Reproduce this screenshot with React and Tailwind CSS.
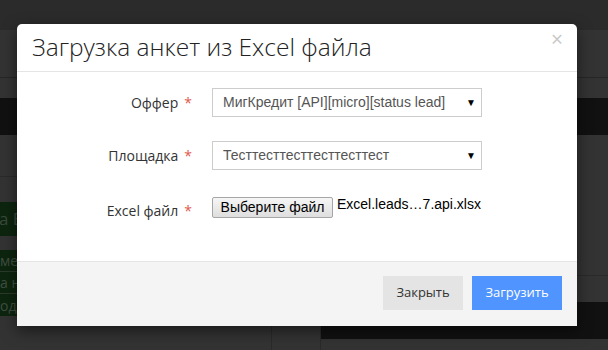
import React from 'react';

const Field = ({ label, children, className = '' }) => (
  <div className={`flex items-center ${className}`}>
    <div className="w-[175px] shrink-0 text-right font-['Open_Sans',sans-serif] text-[14px] text-[#333]">
      {label}
      <span className="ml-[6px] text-[#e05a4e]">*</span>
    </div>
    <div className="ml-[20px] flex items-start">{children}</div>
  </div>
);

const Select = ({ value }) => (
  <div className="flex h-[29px] w-[270px] items-center justify-between border border-[#ccc] bg-white pl-[10px] pr-[5px] font-['Liberation_Sans',Arial,sans-serif] text-[14px] text-[#555]">
    <span>{value}</span>
    <span className="text-[10px] text-black">▼</span>
  </div>
);

const App = () => {
  return (
    <div className="relative h-[350px] w-[608px] overflow-hidden bg-[#333] font-['Open_Sans',sans-serif]">
      {/* dimmed page behind the dialog */}
      <div className="h-[30px] bg-[#2b2b2b]" />
      <div className="h-[48px] border-b border-[#262626] bg-[#333]" />
      <div className="h-[20px] bg-[#333]" />
      <div className="h-[37px] bg-[#111]" />
      <div className="flex h-[215px]">
        <div className="w-[272px] border-r border-[#2a2a2a]">
          <div className="h-[42px] border-b border-[#2a2a2a]" />
          <div className="h-[25px]" />
          <div className="flex h-[34px] items-center overflow-hidden bg-[#0d250f] whitespace-nowrap text-[17px] text-[#3a4a3a]">
            <span className="-ml-[1px]">a Excel</span>
          </div>
          <div className="h-[14px]" />
          <div className="bg-[#0d250f] text-[14px] text-[#3f4f40]">
            <div className="flex h-[22px] items-center border-b border-[#2b3a2b] whitespace-nowrap">мерчант</div>
            <div className="flex h-[22px] items-center border-b border-[#2b3a2b] whitespace-nowrap">а нагрузка</div>
            <div className="flex h-[22px] items-center whitespace-nowrap">ода</div>
          </div>
        </div>
        <div className="w-[49px] border-r border-[#2a2a2a]" />
        <div className="flex-1">
          <div className="h-[141px] border-b border-[#2a2a2a]" />
          <div className="h-[26px]" />
          <div className="h-[37px] bg-[#111] pl-[26px] text-[14px] text-[#2a2a2a]">Рейтинг</div>
        </div>
      </div>

      {/* dialog */}
      <div className="absolute left-[17px] top-[24px] flex h-[302px] w-[560px] flex-col rounded-t-[5px] bg-white shadow-[0_5px_15px_rgba(0,0,0,0.5)]">
        <div className="relative flex h-[48px] items-center border-b border-[#e5e5e5] pl-[15px]">
          <h4 className="font-['Open_Sans',sans-serif] text-[24.5px] font-light leading-none text-[#222]">
            Загрузка анкет из Excel файла
          </h4>
          <span className="absolute right-[14px] top-[5px] text-[21px] leading-none text-[#c8c8c8]">×</span>
        </div>

        <div className="h-[189px] pt-[16px]">
          <Field label="Оффер">
            <Select value="МигКредит [API][micro][status lead]" />
          </Field>
          <Field label="Площадка" className="mt-[24px]">
            <Select value="Тесттесттесттесттесттест" />
          </Field>
          <Field label="Excel файл" className="mt-[26px]">
            <div className="flex h-[29px] items-start pt-[1px] font-['Liberation_Sans',Arial,sans-serif] text-[14px] text-black">
              <div className="flex h-[21px] w-[121px] items-center justify-center rounded-[2px] border border-[#a6a6a6] bg-gradient-to-b from-[#f6f6f6] to-[#dedede]">
                Выберите файл
              </div>
              <span className="-mt-[3px] ml-[4px]">Excel.leads…7.api.xlsx</span>
            </div>
          </Field>
        </div>

        <div className="flex flex-1 items-start justify-end gap-[9px] border-t border-[#e5e5e5] bg-[#f4f4f4] pr-[15px] pt-[14px]">
          <button className="h-[34px] w-[80px] bg-[#e4e4e4] font-['Open_Sans',sans-serif] text-[13px] text-[#333]">
            Закрыть
          </button>
          <button className="h-[34px] w-[90px] bg-[#4f94ff] font-['Open_Sans',sans-serif] text-[13px] text-white">
            Загрузить
          </button>
        </div>
      </div>
    </div>
  );
};

export default App;
